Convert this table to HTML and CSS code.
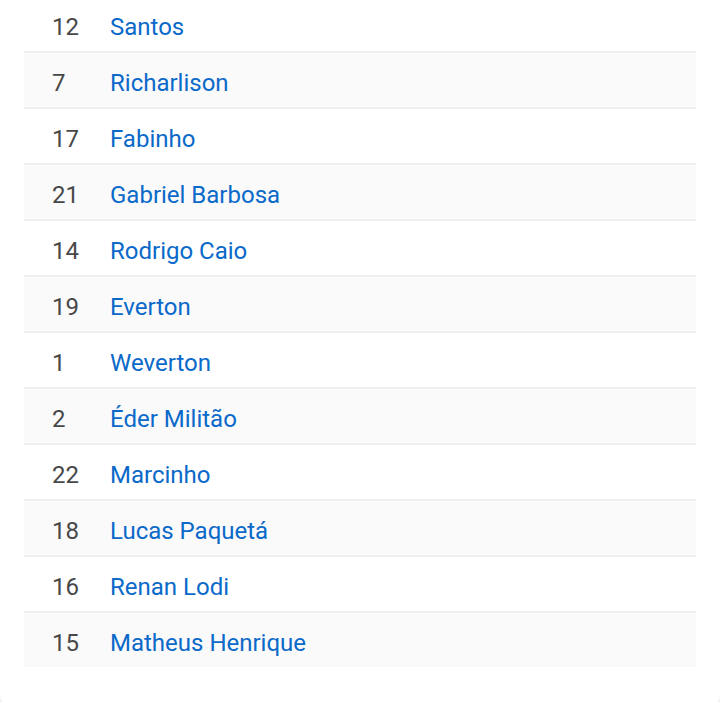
FILE: index.html
```html
<!DOCTYPE html>
<html>
<head>
<meta charset="utf-8">
<link rel="stylesheet" href="styles.css">
</head>
<body>
<div class="card">
  <div class="list">
    <div class="row"><span class="num">12</span><a class="name">Santos</a></div>
    <div class="row alt"><span class="num">7</span><a class="name">Richarlison</a></div>
    <div class="row"><span class="num">17</span><a class="name">Fabinho</a></div>
    <div class="row alt"><span class="num">21</span><a class="name">Gabriel Barbosa</a></div>
    <div class="row"><span class="num">14</span><a class="name">Rodrigo Caio</a></div>
    <div class="row alt"><span class="num">19</span><a class="name">Everton</a></div>
    <div class="row"><span class="num">1</span><a class="name">Weverton</a></div>
    <div class="row alt"><span class="num">2</span><a class="name">Éder Militão</a></div>
    <div class="row"><span class="num">22</span><a class="name">Marcinho</a></div>
    <div class="row alt"><span class="num">18</span><a class="name">Lucas Paquetá</a></div>
    <div class="row"><span class="num">16</span><a class="name">Renan Lodi</a></div>
    <div class="row alt"><span class="num">15</span><a class="name">Matheus Henrique</a></div>
  </div>
</div>
</body>
</html>
```
FILE: styles.css
```css
html, body {
  margin: 0;
  padding: 0;
  background: #f3f3f3;
  overflow: hidden;
}
.card {
  background: #fff;
  border-radius: 0 0 16px 16px;
  padding: 0 24px 42px;
  margin-top: -5px;
  height: 672px;
}
.list {
  display: flex;
  flex-direction: column;
}
.row {
  display: flex;
  align-items: center;
  box-sizing: border-box;
  height: 56px;
  padding-top: 6px;
  border-top: 2px solid #efefef;
  font-family: Roboto, "Noto Sans", sans-serif;
  font-size: 24px;
}
.row.alt {
  background: #fafafa;
}
.num {
  width: 58px;
  padding-left: 28px;
  color: #484848;
}
.name {
  color: #0a69c9;
  text-decoration: none;
}
```
